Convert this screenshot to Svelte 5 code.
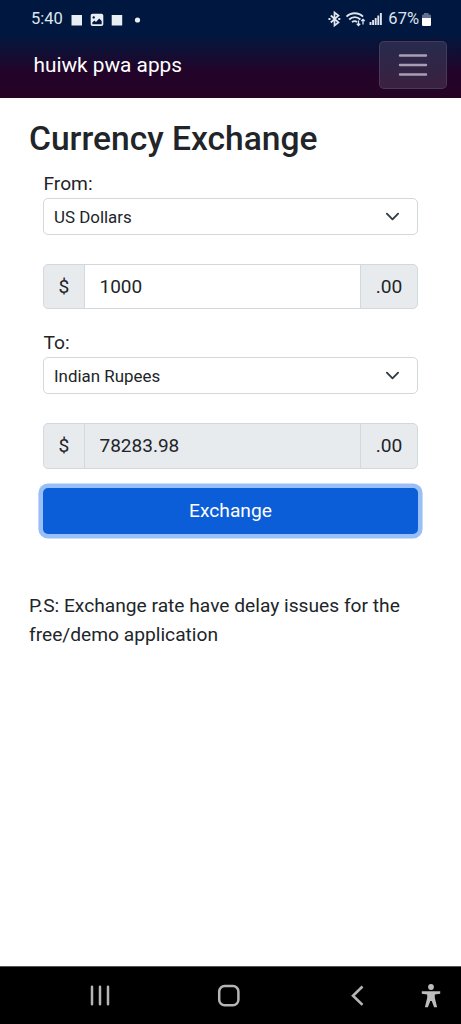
<script lang="ts">
    const RATE = 78.28398

    const currencies = ["US Dollars", "Indian Rupees", "Euro", "British Pounds"]

    let from = $state("US Dollars");
    let to = $state("Indian Rupees");
    let amount = $state("1000");
    let result = $state("78283.98");

    const exchange = () => {
        result = (Number(amount) * RATE).toFixed(2);
    }
</script>

<div class="screen">
    <header>
        <div class="status">
            <span class="clock">5:40</span>
            <svg class="notifications" width="72" height="16" viewBox="0 0 72 16" fill="#e9eef5">
                <rect x="1.500" y="3" width="10.500" height="10.500" />
                <path fill-rule="evenodd" d="M22.500 1.800h9a1.800 1.800 0 0 1 1.800 1.800v8.600a1.800 1.800 0 0 1-1.800 1.800h-9a1.800 1.800 0 0 1-1.800-1.800V3.600a1.800 1.800 0 0 1 1.800-1.800zM22.300 10.500v1.800h9.400V9l-2.500-2.600-3.200 3.700-1.600-1.500zM23.700 4.200a1.200 1.200 0 1 0 0 2.400 1.200 1.200 0 0 0 0-2.400z" />
                <rect x="41.700" y="3" width="10.500" height="10.500" />
                <circle cx="67.500" cy="8" r="2.600" />
            </svg>
            <svg class="signals" width="55" height="18" viewBox="0 0 55 18" fill="none" stroke="#dfe5ee" stroke-width="1.700">
                <path d="M2.800 5.500l7.700 7-4 3V2.500l4 3-7.700 7" />
                <path d="M.5 9h2M10.300 9h2" stroke-width="2" />
                <path d="M18.500 6.700c4.500-4.600 12-4.600 16.500 0M21.200 9.500c3.200-3.100 8-3.100 11.200 0M24 12.200c1.700-1.500 3.700-1.500 5 0" stroke-width="1.800" />
                <path d="M30.500 10.500v5M28.800 13.800l1.700 1.700 1.700-1.700M35 14.500V9.300M33.300 11l1.700-1.700 1.700 1.700" stroke-width="1.300" />
                <path d="M42.500 15v-3M45.100 15v-5M47.700 15V8M50.300 15V5.500M52.900 15V3" stroke-width="1.900" />
            </svg>
            <span class="percent">67%</span>
            <svg width="11" height="16" viewBox="0 0 11 16">
                <path d="M3 1h4.500v1.500H9A1.200 1.200 0 0 1 10 3.700V7H1V3.700a1.200 1.200 0 0 1 1-1.200h1z" fill="#65718c" />
                <path d="M1 6h9v6.800a1.200 1.200 0 0 1-1.200 1.200H2.200A1.200 1.200 0 0 1 1 12.800z" fill="#fff" />
            </svg>
        </div>
        <nav>
            <span class="brand">huiwk pwa apps</span>
            <button class="toggler" aria-label="Toggle navigation">
                <svg width="30" height="24" viewBox="0 0 30 24" stroke="#a99fb5" stroke-width="2.400" stroke-linecap="round">
                    <path d="M2 2.500h26M2 12h26M2 21.500h26" />
                </svg>
            </button>
        </nav>
    </header>

    <main>
        <h1>Currency Exchange</h1>

        <div class="form">
            <label for="from">From:</label>
            <div class="select">
                <select id="from" bind:value={from}>
                    {#each currencies as currency}
                        <option>{currency}</option>
                    {/each}
                </select>
                <svg viewBox="0 0 16 16"><path d="m2 5 6 6 6-6" /></svg>
            </div>
            <div class="group">
                <span class="addon">$</span>
                <input type="text" aria-label="Amount" bind:value={amount} />
                <span class="addon cents">.00</span>
            </div>

            <label for="to">To:</label>
            <div class="select">
                <select id="to" bind:value={to}>
                    {#each currencies as currency}
                        <option>{currency}</option>
                    {/each}
                </select>
                <svg viewBox="0 0 16 16"><path d="m2 5 6 6 6-6" /></svg>
            </div>
            <div class="group">
                <span class="addon">$</span>
                <input type="text" aria-label="Result" value={result} readonly />
                <span class="addon cents">.00</span>
            </div>

            <button class="submit" onclick={exchange}>Exchange</button>
        </div>

        <p>P.S: Exchange rate have delay issues for the free/demo application</p>
    </main>

    <footer>
        <svg width="22" height="24" viewBox="0 0 22 24" stroke="#b5b5b5" stroke-width="2.500" stroke-linecap="round">
            <path d="M3 2.800v17.400M11 2.800v17.400M19 2.800v17.400" />
        </svg>
        <svg width="24" height="24" viewBox="0 0 24 24" fill="none" stroke="#b5b5b5" stroke-width="2.500">
            <rect x="2.200" y="2" width="19.200" height="19.200" rx="5.500" />
        </svg>
        <svg width="16" height="24" viewBox="0 0 16 24" fill="none" stroke="#b5b5b5" stroke-width="2.600">
            <path d="M13.500 2.500L4 11.700l9.500 9.200" />
        </svg>
        <svg width="22" height="26" viewBox="0 0 22 26" fill="#bdbdbd">
            <circle cx="11" cy="4" r="2.900" />
            <path d="M1.800 8.200h18.400v2.500l-5.400.8v3.200l2.300 9.600h-3L11.700 18h-1.400l-2.400 6.300h-3l2.300-9.600v-3.200l-5.400-.8z" />
        </svg>
    </footer>
</div>

<style>
    :global(body) {
        background: #fff;
    }

    .screen {
        display: flex;
        flex-direction: column;
        height: 1024px;
        overflow: hidden;
        color: #212529;
        font-family: Roboto, sans-serif;
        font-size: 19.2px;
        line-height: 28.8px;
    }

    .screen * {
        box-sizing: border-box;
    }

    svg {
        display: block;
        flex: none;
    }

    header {
        height: 98px;
        color: #fff;
        background: linear-gradient(#00183f 0, #00183f 34px, #230429 72px, #250326 98px);
    }

    .status {
        display: flex;
        align-items: center;
        height: 38px;
        padding: 0 29px 0 31px;
        font-size: 16.5px;
        color: #dfe5ee;
    }

    .notifications {
        margin: 1px 0 0 7px;
    }

    .signals {
        margin: 0 5px 0 auto;
    }

    .percent {
        margin-right: 2px;
    }

    .status > :last-child {
        margin-top: 1px;
    }

    nav {
        display: flex;
        align-items: center;
        justify-content: space-between;
        padding: 3px 14px 0 33.5px;
    }

    .brand {
        font-size: 20.8px;
    }

    .toggler {
        display: grid;
        place-items: center;
        width: 68px;
        height: 48px;
        padding: 0;
        border: 1px solid rgba(255, 255, 255, .1);
        border-radius: 5px;
        background: linear-gradient(#262b4d, #3c2040);
    }

    main {
        flex: 1;
        padding: 21px 29px 0;
    }

    h1 {
        margin: 0 0 10.2px;
        font-size: 33.6px;
        font-weight: 500;
        line-height: 40.4px;
    }

    .form {
        padding: 0 14px;
    }

    label {
        display: block;
        height: 28.4px;
        padding-left: .5px;
    }

    .select {
        display: grid;
        align-items: center;
    }

    .select > * {
        grid-area: 1 / 1;
    }

    .select svg {
        justify-self: end;
        width: 15px;
        margin-right: 18px;
        fill: none;
        stroke: #343a40;
        stroke-width: 2;
        stroke-linecap: round;
        stroke-linejoin: round;
        pointer-events: none;
    }

    select {
        width: 100%;
        height: 37.2px;
        padding: 0 10px;
        border: 1px solid #d3d8dc;
        border-radius: 5px;
        background: #fff;
        color: #212529;
        font: 16.9px Roboto, sans-serif;
        appearance: none;
    }

    .group {
        display: flex;
        height: 45.6px;
        margin: 28.6px 0 19.4px;
        border: 1px solid #d3d8dc;
        border-radius: 5px;
        background: #e8ebee;
        overflow: hidden;
    }

    .addon {
        display: grid;
        place-items: center;
        width: 40px;
        padding-top: 1px;
    }

    .cents {
        width: 56px;
    }

    input {
        flex: 1;
        min-width: 0;
        padding: 0 15px 0 14.5px;
        border: solid #d3d8dc;
        border-width: 0 1px;
        background: #fff;
        color: #212529;
        font: 19px Roboto, sans-serif;
    }

    input[readonly] {
        background: #e8ebee;
    }

    .submit {
        display: block;
        width: 100%;
        height: 45.6px;
        border: 0;
        border-radius: 5px;
        background: #0b5ed7;
        box-shadow: 0 0 0 4.6px #98bff8;
        color: #fff;
        font: 19.2px Roboto, sans-serif;
    }

    p {
        margin: 57.6px 0 0;
        line-height: 29px;
    }

    footer {
        display: flex;
        align-items: center;
        height: 58px;
        padding: 0 19px 0 89px;
        border-top: 1px solid #555;
        background: #000;
    }

    footer svg:nth-child(2) {
        margin-left: 106px;
    }

    footer svg:nth-child(3) {
        margin-left: auto;
    }

    footer svg:nth-child(4) {
        margin-left: 55px;
    }
</style>
